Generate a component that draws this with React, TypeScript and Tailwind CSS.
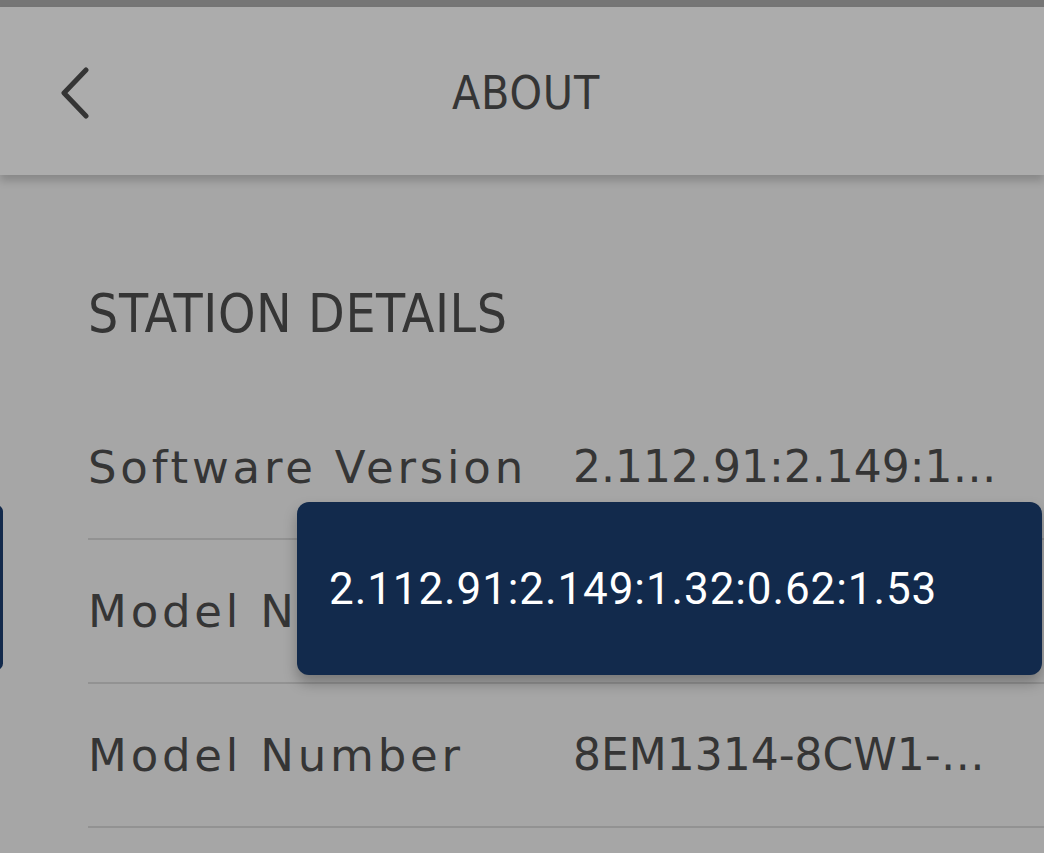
const ROWS = [
  { label: "Software Version", value: "2.112.91:2.149:1.32:0.62:1.53" },
  { label: "Model Name", value: "SICHARGE D 160 kW" },
  { label: "Model Number", value: "8EM1314-8CW1-1FA1" },
]

export default function App() {
  return (
    <div className="relative w-[1044px] h-[853px] overflow-hidden bg-[#a6a6a6] text-[#353535]">
      <div className="h-[7px] bg-[#767676]" />

      <header className="relative z-10 h-[168px] flex items-center justify-center bg-[#acacac] shadow-[0_6px_8px_rgba(0,0,0,0.18)]">
        <button className="absolute left-[60px] top-[60px]">
          <svg width="30" height="52" viewBox="0 0 30 52" fill="none">
            <polyline
              points="26,3 4,26 26,49"
              stroke="#353535"
              strokeWidth="5"
              strokeLinecap="round"
              strokeLinejoin="round"
            />
          </svg>
        </button>
        <h1
          className="text-[46px] leading-none tracking-[0.8px] pt-[4px] pl-[8px]"
          style={{ fontFamily: '"DejaVu Sans Condensed", "DejaVu Sans", sans-serif' }}
        >
          ABOUT
        </h1>
      </header>

      <main className="pl-[88px] pt-[112px]">
        <h2
          className="text-[53px] leading-none tracking-[0.6px]"
          style={{ fontFamily: '"DejaVu Sans Condensed", "DejaVu Sans", sans-serif' }}
        >
          STATION DETAILS
        </h2>

        <div className="mt-[56px]" style={{ fontFamily: '"DejaVu Sans", sans-serif' }}>
          {ROWS.map((row) => (
            <div key={row.label} className="flex items-center h-[144px] border-b-2 border-[#929292]">
              <div className="w-[485px] shrink-0 text-[45px] leading-none tracking-[3.8px] whitespace-nowrap">
                {row.label}
              </div>
              <div className="w-[426px] text-[44px] leading-none whitespace-nowrap overflow-hidden text-ellipsis">
                {row.value}
              </div>
            </div>
          ))}
        </div>
      </main>

      <div className="absolute left-[-10px] top-[505px] w-[13px] h-[165px] rounded-[8px] bg-[#132a4c]" />

      <div className="absolute left-[297px] top-[502px] w-[745px] h-[173px] rounded-[12px] bg-[#122a4c] flex items-center pl-[32px] shadow-[0_8px_14px_rgba(0,0,0,0.28)]">
        <span className="text-white text-[44px] leading-none tracking-[0.9px]" style={{ fontFamily: "Roboto, sans-serif" }}>
          2.112.91:2.149:1.32:0.62:1.53
        </span>
      </div>
    </div>
  )
}
